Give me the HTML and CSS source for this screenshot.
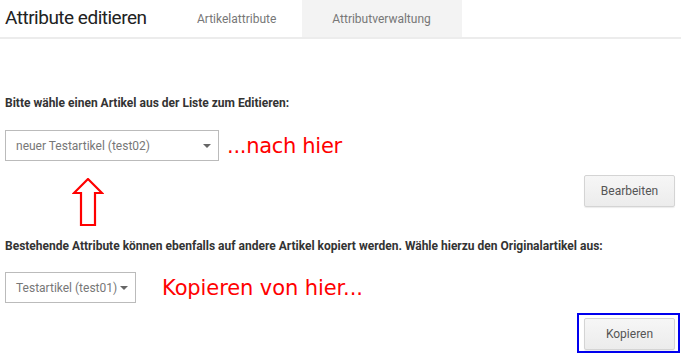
FILE: index.html
```html
<!DOCTYPE html>
<html lang="de">
<head>
  <meta charset="UTF-8" />
  <title>Attribute editieren</title>
  <link rel="stylesheet" href="styles.css">
</head>
<body>
  <header class="topbar">
    <h1 class="title">Attribute editieren</h1>
    <nav class="tabs">
      <a class="tab">Artikelattribute</a>
      <a class="tab active">Attributverwaltung</a>
    </nav>
  </header>

  <main class="content">
    <p class="label first">Bitte wähle einen Artikel aus der Liste zum Editieren:</p>
    <div class="row">
      <div class="select wide">
        <span>neuer Testartikel (test02)</span>
        <span class="caret"></span>
      </div>
      <span class="note">...nach hier</span>
    </div>

    <div class="row between">
      <svg class="arrow" width="32" height="49" viewBox="0 0 32 49">
        <path d="M16 1 L30 15 L23 15 L23 47 L9 47 L9 15 L2 15 Z" fill="#fff" stroke="#ff0000" stroke-width="2.2" stroke-linejoin="miter"/>
      </svg>
      <button class="btn">Bearbeiten</button>
    </div>

    <p class="label second">Bestehende Attribute können ebenfalls auf andere Artikel kopiert werden. Wähle hierzu den Originalartikel aus:</p>
    <div class="row">
      <div class="select narrow">
        <span>Testartikel (test01)</span>
        <span class="caret"></span>
      </div>
      <span class="note note2">Kopieren von hier...</span>
    </div>

    <div class="row end">
      <div class="highlight">
        <button class="btn">Kopieren</button>
      </div>
    </div>
  </main>
</body>
</html>
```
FILE: styles.css
```css
* {
  box-sizing: border-box;
}

body {
  margin: 0;
  font-family: Roboto, 'Liberation Sans', sans-serif;
  color: #333;
  background: #fff;
  overflow: hidden;
}

.topbar {
  display: flex;
  align-items: stretch;
  height: 39px;
  border-bottom: 2px solid #ececec;
}

.title {
  margin: 0;
  padding: 6px 0 0 5px;
  width: 163px;
  font-size: 19px;
  font-weight: 400;
  color: #222;
  letter-spacing: -0.5px;
}

.tabs {
  display: flex;
}

.tab {
  padding: 12px 26px 0 34px;
  text-align: center;
  font-size: 12px;
  color: #777;
}

.tab.active {
  background: #f3f3f3;
  padding: 12px 31px 0 30px;
}

.content {
  padding: 0 6px 0 5px;
}

.label {
  margin: 0;
  font-size: 12px;
  font-weight: 700;
  color: #333;
}

.label.first {
  padding-top: 57px;
  padding-bottom: 20px;
}

.label.second {
  padding-top: 12px;
  padding-bottom: 19px;
}

.row {
  display: flex;
  align-items: center;
}

.row.between {
  justify-content: space-between;
  align-items: flex-start;
  padding-top: 17px;
}

.row.end {
  justify-content: flex-end;
  padding-top: 10px;
}

.select {
  display: flex;
  align-items: center;
  justify-content: space-between;
  height: 31px;
  padding: 0 7px 0 10px;
  border: 1px solid #bbb;
  font-size: 12px;
  color: #777;
}

.select.wide {
  width: 214px;
}

.select.narrow {
  width: 131px;
  padding-left: 10px;
}

.caret {
  width: 0;
  height: 0;
  border-left: 4px solid transparent;
  border-right: 4px solid transparent;
  border-top: 4px solid #666;
}

.note {
  margin-left: 8px;
  font-family: 'DejaVu Sans', sans-serif;
  font-size: 21px;
  color: #ff0000;
  letter-spacing: -0.3px;
}

.note2 {
  margin-left: 26px;
  letter-spacing: -0.1px;
}

.arrow {
  margin-left: 67px;
  display: block;
}

.btn {
  width: 91px;
  height: 32px;
  margin-top: -3px;
  border: 1px solid #d4d4d4;
  border-radius: 2px;
  background: linear-gradient(#f6f6f6, #ececec);
  box-shadow: 0 1px 1px rgba(0, 0, 0, 0.08);
  font-family: Roboto, sans-serif;
  font-size: 12px;
  color: #555;
}

.highlight {
  margin-right: -5px;
  padding: 3px 3px 1px 5px;
  border: 2px solid #0000ee;
}

.highlight .btn {
  margin-top: 0;
  display: block;
}
```
